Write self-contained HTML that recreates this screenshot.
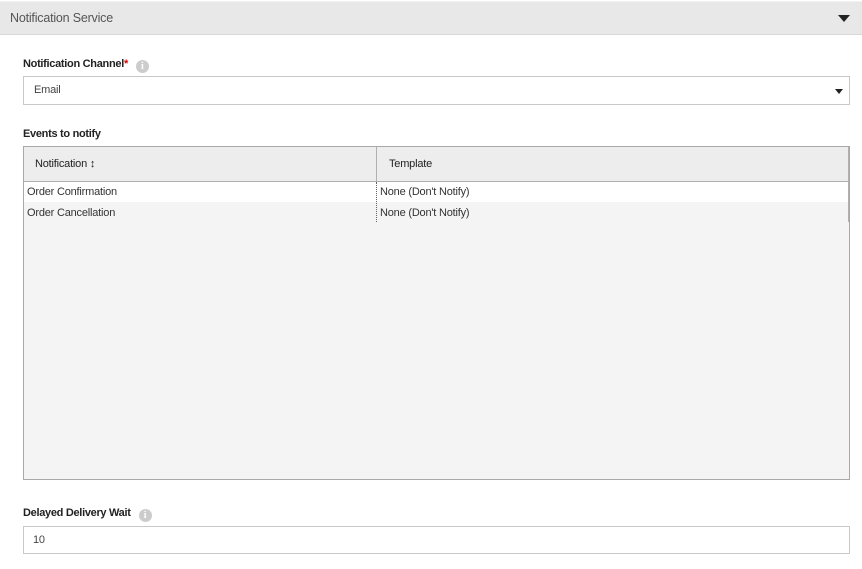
<!DOCTYPE html><html><head><style>
body{margin:0;width:862px;height:569px;background:#fff;font-family:"Liberation Sans",sans-serif;position:relative;overflow:hidden;color:#333}
.a{position:absolute}
.lbl{font-size:11px;font-weight:bold;color:#222;letter-spacing:-0.3px;white-space:nowrap}
.i{display:inline-block;vertical-align:-2px;margin-left:8px;width:13px;height:13px;border-radius:50%;background:#ccc;color:#fff;font-size:10px;font-weight:bold;text-align:center;line-height:13px;font-family:'Liberation Serif',serif;letter-spacing:0}
.t{font-size:11px;color:#333;letter-spacing:-0.2px;white-space:nowrap}
</style></head><body>
<div class="a" style="left:0;top:1px;width:862px;height:34px;background:#e8e8e8;border-top:1px solid #f2f2f2;border-bottom:1px solid #d8d8d8;box-sizing:border-box"></div>
<div class="a" style="left:10px;top:11px;font-size:12.5px;color:#555;letter-spacing:-0.2px">Notification Service</div>
<div class="a" style="left:838px;top:15px;width:0;height:0;border-left:6px solid transparent;border-right:6px solid transparent;border-top:7px solid #222"></div>

<div class="a lbl" style="left:23px;top:58px">Notification Channel<span style="color:#d00">*</span><span class="i">i</span></div>
<div class="a" style="left:23px;top:76px;width:827px;height:29px;border:1px solid #c8c8c8;box-sizing:border-box"></div>
<div class="a t" style="left:34px;top:84px;color:#444">Email</div>
<div class="a" style="left:835px;top:89px;border-left:4px solid transparent;border-right:4px solid transparent;border-top:5px solid #222"></div>

<div class="a lbl" style="left:23px;top:128px">Events to notify</div>
<div class="a" style="left:23px;top:146px;width:827px;height:334px;border:1px solid #a8a8a8;background:#f4f4f4;box-sizing:border-box"></div>
<div class="a" style="left:24px;top:147px;width:825px;height:35px;background:#ededed;border-bottom:1px solid #b0b0b0;box-sizing:border-box"></div>
<div class="a" style="left:376px;top:147px;width:1px;height:35px;background:#b0b0b0"></div>
<div class="a" style="left:848px;top:147px;width:1px;height:75px;background:#b0b0b0"></div>
<div class="a t" style="left:35px;top:158px;color:#222">Notification <b>&#x2195;</b></div>
<div class="a t" style="left:389px;top:158px;color:#222">Template</div>
<div class="a" style="left:24px;top:182px;width:824px;height:20px;background:#fff"></div>
<div class="a" style="left:376px;top:182px;width:0;height:40px;border-left:1px dotted #666"></div>
<div class="a t" style="left:27px;top:186px">Order Confirmation</div>
<div class="a t" style="left:380px;top:186px">None (Don't Notify)</div>
<div class="a t" style="left:27px;top:207px">Order Cancellation</div>
<div class="a t" style="left:380px;top:207px">None (Don't Notify)</div>

<div class="a lbl" style="left:23px;top:507px">Delayed Delivery Wait<span class="i">i</span></div>
<div class="a" style="left:23px;top:526px;width:827px;height:28px;border:1px solid #c8c8c8;box-sizing:border-box"></div>
<div class="a t" style="left:33px;top:534px;color:#444">10</div>
</body></html>
